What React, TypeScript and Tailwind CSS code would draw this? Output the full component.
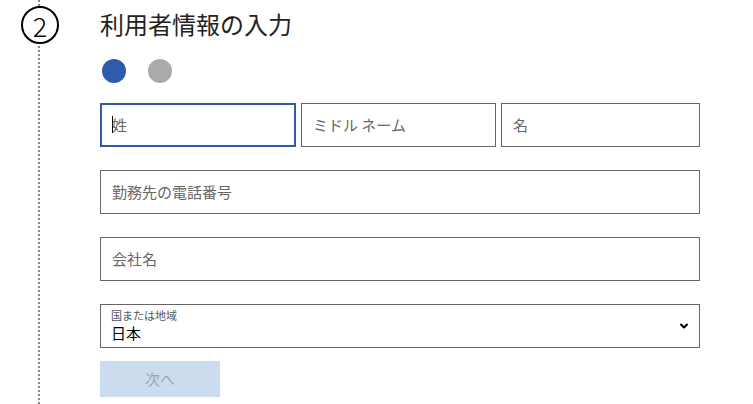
import { ChevronDown } from 'lucide-react';

const font = { fontFamily: '"Noto Sans CJK JP", "Noto Sans", sans-serif' };

function Field({ placeholder }: { placeholder: string }) {
  return (
    <input
      type="text"
      placeholder={placeholder}
      className="h-[44px] w-full border border-[#666] bg-white px-[11px] pb-[2px] text-[15px] text-[#222] outline-none placeholder:text-[#666]"
    />
  );
}

export default function App() {
  return (
    <div className="flex min-h-[404px] bg-white text-[#222]" style={font}>
      <div className="flex w-[100px] shrink-0 flex-col">
        <div className="ml-[38px] h-[6px] w-0 border-l-2 border-dotted border-[#888]" />
        <div className="ml-[21px] flex h-[38px] w-[38px] items-center justify-center rounded-full border-2 border-black text-[27px] font-light leading-none text-black">
          2
        </div>
        <div className="ml-[38px] mt-[2px] w-0 flex-1 border-l-2 border-dotted border-[#888]" />
      </div>

      <div className="flex w-[600px] flex-col pt-[6px]">
        <h2 className="text-[24px] leading-[36px] font-normal">利用者情報の入力</h2>

        <div className="ml-[2px] mt-[17px] flex gap-[22px]">
          <span className="h-[24px] w-[24px] rounded-full bg-[#2f5bab]" />
          <span className="h-[24px] w-[24px] rounded-full bg-[#aaaaaa]" />
        </div>

        <div className="mt-[20px] grid grid-cols-[196px_195px_199px] gap-[5px]">
          <div className="relative">
            <input
              type="text"
              placeholder="姓"
              className="h-[44px] w-full border-2 border-[#2f5bab] bg-white px-[10px] pb-[2px] text-[15px] outline-none placeholder:text-[#666]"
            />
            <span className="absolute left-[12px] top-[13px] h-[17px] w-px bg-black" />
          </div>
          <Field placeholder="ミドル ネーム" />
          <Field placeholder="名" />
        </div>

        <div className="mt-[23px]">
          <Field placeholder="勤務先の電話番号" />
        </div>

        <div className="mt-[23px]">
          <Field placeholder="会社名" />
        </div>

        <div className="mt-[23px] flex h-[44px] items-center border border-[#666] pl-[10px] pr-[9px]">
          <div className="flex flex-1 flex-col">
            <span className="text-[11px] leading-[14px] text-[#555]">国または地域</span>
            <span className="text-[15px] leading-[22px] text-black">日本</span>
          </div>
          <ChevronDown size={12} strokeWidth={4} className="text-black" />
        </div>

        <button
          type="button"
          className="mt-[13px] h-[36px] w-[120px] bg-[#ccdcef] text-[15px] text-[#9aa4b0]"
        >
          次へ
        </button>
      </div>
    </div>
  );
}
